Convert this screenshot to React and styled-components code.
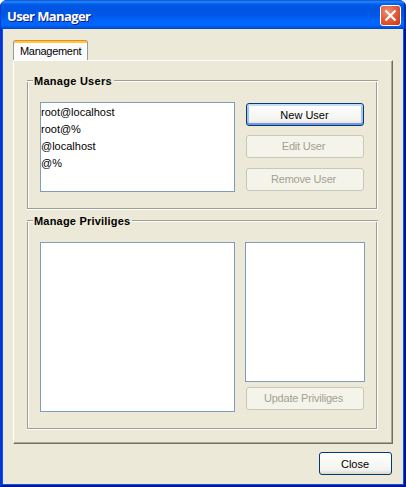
import React from "react";
import styled, { createGlobalStyle } from "styled-components";

const GlobalStyle = createGlobalStyle`
  *, *::before, *::after { box-sizing: border-box; }
  body { margin: 0; background: #fff; overflow: hidden; }
`;

const Window = styled.div`
  width: 406px;
  height: 487px;
  display: flex;
  flex-direction: column;
  border-radius: 7px 7px 0 0;
  overflow: hidden;
  background: #0831d9;
  font: 11px/13px "Liberation Sans", Arial, sans-serif;
  color: #000;
`;

const TitleBar = styled.header`
  height: 29px;
  flex: none;
  display: flex;
  align-items: center;
  justify-content: space-between;
  padding: 2px 5px 0 7px;
  background: linear-gradient(
    to bottom,
    #0a50d0 0, #2a8cff 2px, #0a6cf5 3px, #0058e6 5px, #0054e0 10px,
    #0058ea 16px, #0265fc 21px, #0267ff 25px, #0058e8 27px, #0042c8 29px
  );
  box-shadow: inset 1px 0 #0a3fc8, inset -2px 0 #0530b0;
`;

const Title = styled.h1`
  margin: 0;
  font: bold 13px/18px "Open Sans", "Noto Sans", sans-serif;
  letter-spacing: -0.62px;
  color: #fff;
  text-shadow: 1px 1px 0 #0a1883;
  white-space: nowrap;
`;

const CloseBox = styled.button`
  width: 21px;
  height: 21px;
  padding: 0;
  display: grid;
  place-items: center;
  border: 1px solid #fff;
  border-radius: 3px;
  background: radial-gradient(circle at 35% 30%, #ee9275 0, #e2603b 45%, #d6441c 80%, #b9300c 100%);
`;

const Frame = styled.div`
  flex: 1;
  display: flex;
  border-style: solid;
  border-width: 0 2px 2px 2px;
  border-color: #0016a0 #00129a #001590 #0831d9;
`;

const Body = styled.main`
  flex: 1;
  display: flex;
  flex-direction: column;
  padding: 11px 10px 9px 10px;
  background: #ece9d8;
  border: solid #0855ee;
  border-width: 0 1px 1px 1px;
`;

const Tab = styled.div`
  width: 75px;
  height: 20px;
  padding: 2px 0 0 6px;
  border: 1px solid #919b9c;
  border-top: 0;
  border-bottom: 0;
  border-radius: 3px 3px 0 0;
  background: linear-gradient(#e68b2c 0 1px, #ffc73c 1px 3px, #fcfcfe 3px);
  line-height: 18px;
  letter-spacing: -0.3px;
  white-space: nowrap;
`;

const TabPage = styled.section`
  width: 380px;
  height: 384px;
  display: flex;
  flex-direction: column;
  gap: 10px;
  padding: 19px 14px 0 13px;
  border: 1px solid;
  border-color: #fff #716f64 #716f64 #fff;
  box-shadow: inset -1px -1px #aca899;
`;

const Group = styled.section`
  width: 351px;
  height: ${(p) => p.$height}px;
  display: flex;
  flex-direction: column;
`;

const GroupHead = styled.div`
  height: 2px;
  flex: none;
  display: flex;
  background: linear-gradient(#9d9d90 0 1px, #fff 1px);
  padding-left: 6px;
`;

const GroupTitle = styled.h2`
  height: 13px;
  margin: -6px 0 0;
  padding: 0 2px 0 1px;
  background: #ece9d8;
  font: bold 11px/14px "Liberation Sans", Arial, sans-serif;
  letter-spacing: ${(p) => p.$spacing}px;
  white-space: nowrap;
`;

const GroupBody = styled.div`
  flex: 1;
  display: flex;
  gap: ${(p) => p.$gap}px;
  padding: 20px 0 0 12px;
  border: solid #9d9d90;
  border-width: 0 1px 1px 1px;
  margin: 0 1px 1px 0;
  box-shadow: inset 1px 0 #fff, 1px 0 #fff, 0 1px #fff, 1px 1px #fff;
`;

const ListBox = styled.ul`
  width: ${(p) => p.$width}px;
  height: ${(p) => p.$height}px;
  flex: none;
  margin: 0;
  padding: 1px 0 0;
  list-style: none;
  border: 1px solid #7f9db9;
  background: #fff;
`;

const ListItem = styled.li`
  height: 17px;
  line-height: 17px;
`;

const Stack = styled.div`
  display: flex;
  flex-direction: column;
  gap: ${(p) => p.$gap}px;
  padding-top: ${(p) => p.$top || 0}px;
`;

const Button = styled.button`
  width: ${(p) => p.$width || 118}px;
  height: 23px;
  flex: none;
  margin: 0 0 ${(p) => p.$below || 0}px ${(p) => p.$indent || 0}px;
  padding: 1px 1px 0 0;
  border: 1px solid #003c74;
  border-radius: 3px;
  background: linear-gradient(#fff, #f3f3ee 80%, #dcd8cc);
  color: #000;
  font: inherit;
  box-shadow: ${(p) => (p.$focused ? "inset 0 2px #c4dcfc, inset 0 -2px #7895e8, inset 2px 0 #a6c1f2, inset -2px 0 #a6c1f2" : "none")};
  &:disabled {
    padding: 0 3px 0 0;
    border-color: #c9c7ba;
    background: #f5f4ea;
    color: #a1a192;
    letter-spacing: -0.2px;
  }
`;

const Footer = styled.footer`
  display: flex;
  justify-content: flex-end;
  padding: 8px 1px 0 0;
`;

const users = ["root@localhost", "root@%", "@localhost", "@%"];

export default function App() {
  return (
    <>
      <GlobalStyle />
      <Window>
        <TitleBar>
          <Title>User Manager</Title>
          <CloseBox aria-label="Close window">
            <svg width="13" height="13" viewBox="0 0 13 13">
              <path d="M1.5 1.5 11.5 11.5M11.5 1.5 1.5 11.5" stroke="#fff" strokeWidth="2.2" />
            </svg>
          </CloseBox>
        </TitleBar>
        <Frame>
          <Body>
            <Tab>Management</Tab>
            <TabPage>
              <Group $height={130}>
                <GroupHead><GroupTitle $spacing={0.27}>Manage Users</GroupTitle></GroupHead>
                <GroupBody $gap={11}>
                  <ListBox $width={195} $height={90}>
                    {users.map((u) => <ListItem key={u}>{u}</ListItem>)}
                  </ListBox>
                  <Stack $gap={9} $top={1}>
                    <Button $focused>New User</Button>
                    <Button disabled $below={1}>Edit User</Button>
                    <Button disabled>Remove User</Button>
                  </Stack>
                </GroupBody>
              </Group>
              <Group $height={210}>
                <GroupHead><GroupTitle $spacing={0.2}>Manage Priviliges</GroupTitle></GroupHead>
                <GroupBody $gap={10}>
                  <ListBox $width={195} $height={170} />
                  <Stack $gap={5}>
                    <ListBox $width={120} $height={140} />
                    <Button disabled $indent={1}>Update Priviliges</Button>
                  </Stack>
                </GroupBody>
              </Group>
            </TabPage>
            <Footer><Button $width={73}>Close</Button></Footer>
          </Body>
        </Frame>
      </Window>
    </>
  );
}
